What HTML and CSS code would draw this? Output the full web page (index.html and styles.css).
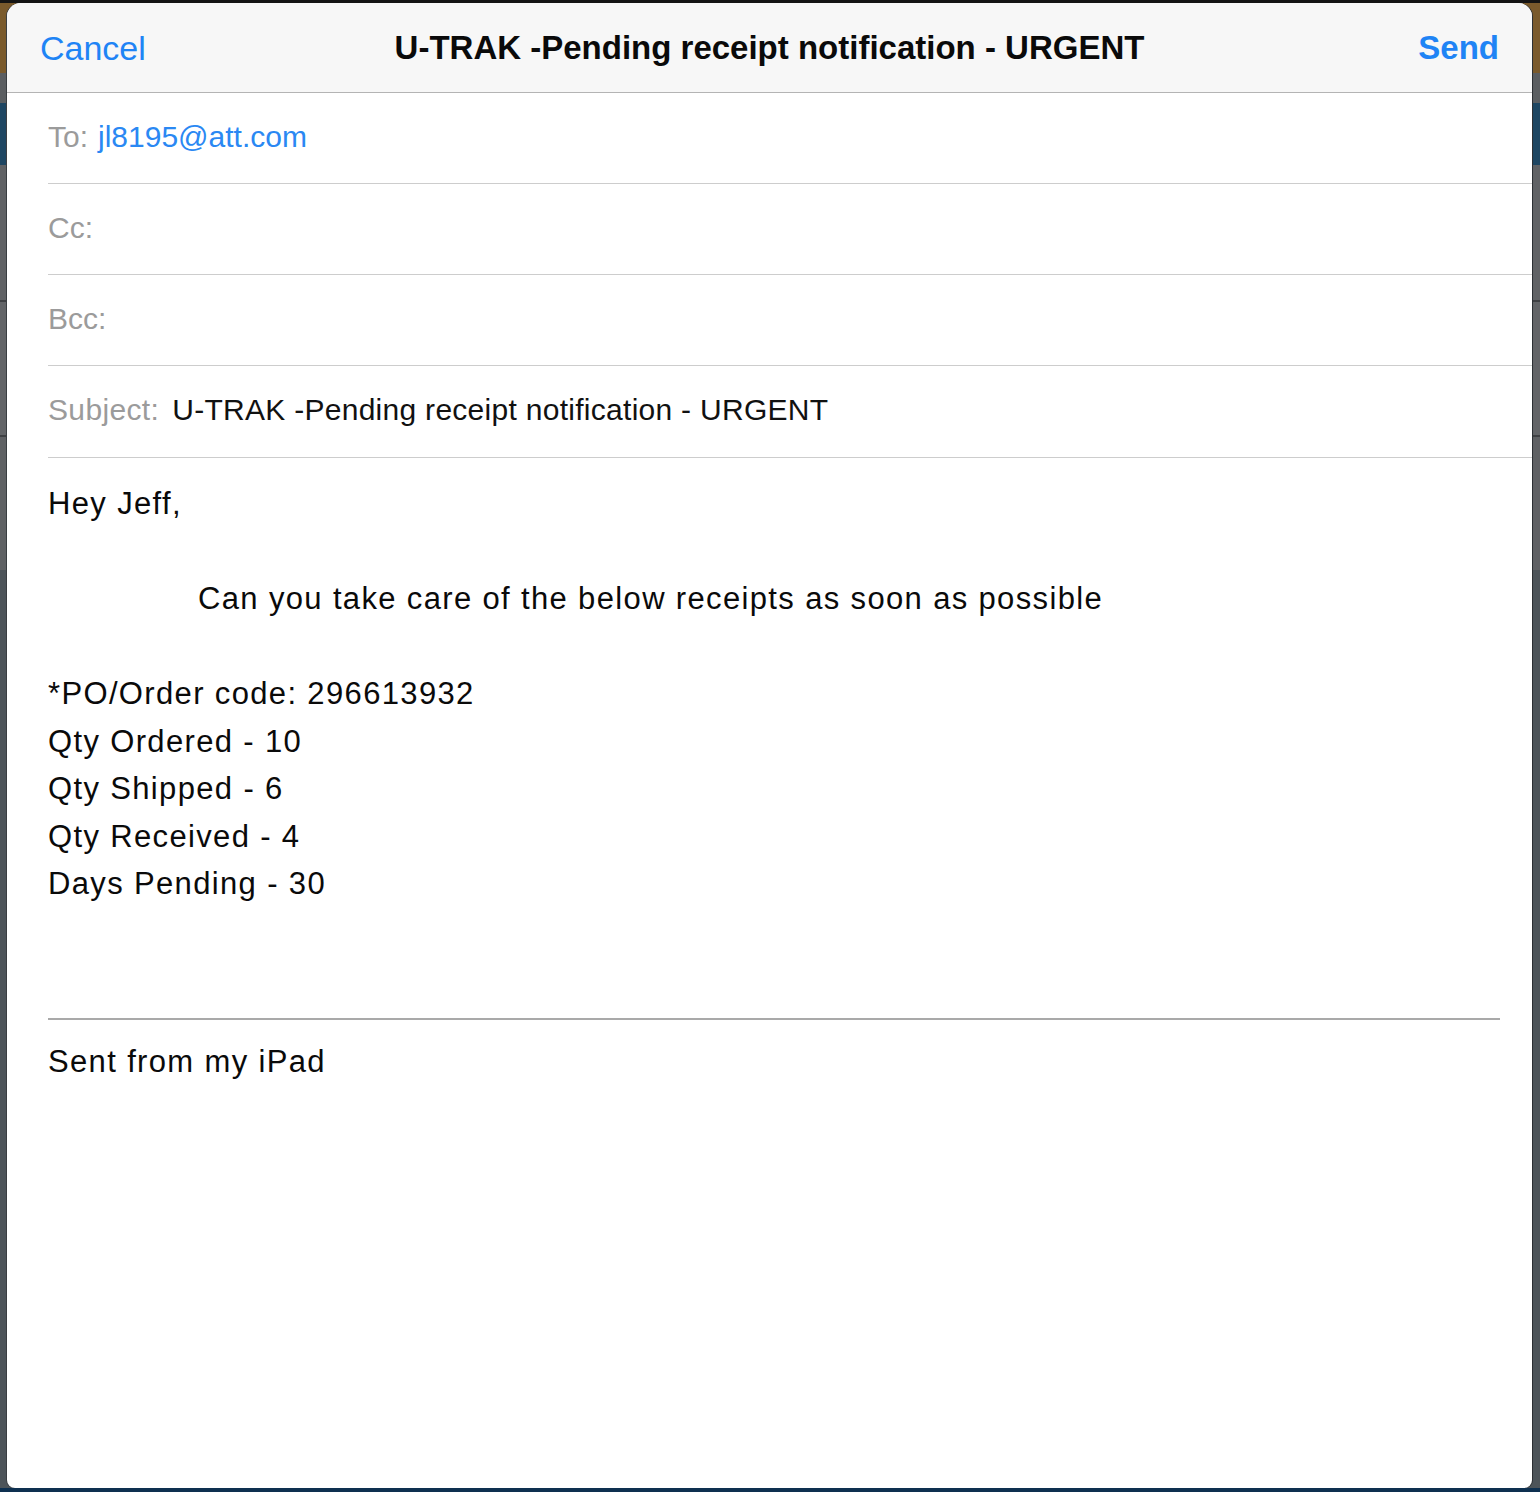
FILE: index.html
```html
<!DOCTYPE html>
<html lang="en">
<head>
<meta charset="utf-8">
<title>U-TRAK -Pending receipt notification - URGENT</title>
<link rel="stylesheet" href="styles.css">
</head>
<body>
<div class="backdrop">
  <div class="band band-black"></div>
  <div class="band band-brown"></div>
  <div class="band band-gray1"></div>
  <div class="band band-blue"></div>
  <div class="band band-gray2"></div>
  <div class="band band-gray3"></div>
  <div class="band band-gray4"></div>
  <div class="band band-slate"></div>
  <div class="band band-navy"></div>
</div>

<div class="sheet">
  <header class="navbar">
    <span class="nav-btn">Cancel</span>
    <h1 class="nav-title">U-TRAK -Pending receipt notification - URGENT</h1>
    <span class="nav-btn nav-send">Send</span>
  </header>

  <div class="field"><span class="label">To:</span><span class="recipient">jl8195@att.com</span></div>
  <div class="field"><span class="label">Cc:</span></div>
  <div class="field"><span class="label">Bcc:</span></div>
  <div class="field field-last"><span class="label label-subject">Subject:</span><span class="subject">U-TRAK -Pending receipt notification - URGENT</span></div>

  <div class="body">
    <p class="line">Hey Jeff,</p>
    <p class="line blank"></p>
    <p class="line indent">Can you take care of the below receipts as soon as possible</p>
    <p class="line blank"></p>
    <p class="line">*PO/Order code: 296613932</p>
    <p class="line">Qty Ordered - 10</p>
    <p class="line">Qty Shipped - 6</p>
    <p class="line">Qty Received - 4</p>
    <p class="line">Days Pending - 30</p>
    <p class="line blank"></p>
    <p class="line blank"></p>
    <div class="sig-rule"></div>
    <p class="line signature">Sent from my iPad</p>
  </div>
</div>
</body>
</html>
```

FILE: styles.css
```css
html, body {
  margin: 0;
  padding: 0;
}

body {
  width: 1540px;
  height: 1492px;
  overflow: hidden;
  position: relative;
  font-family: "Liberation Sans", Arial, sans-serif;
  background: #4d5459;
}

.backdrop {
  display: flex;
  flex-direction: column;
  height: 1492px;
}

.band { flex: none; }
.band-black { height: 3px; background: #141414; }
.band-brown { height: 70px; background: #7a5a2c; }
.band-gray1 { height: 30px; background: #5b5e61; }
.band-blue { height: 62px; background: #1e4662; }
.band-gray2 { height: 135px; background: #606265; border-bottom: 2px solid #3e4043; }
.band-gray3 { height: 133px; background: #626467; border-bottom: 2px solid #3e4043; }
.band-gray4 { height: 133px; background: #5f6164; }
.band-slate { flex: 1; background: #4d5459; }
.band-navy { height: 4px; background: #0e3050; }

.sheet {
  position: absolute;
  left: 7px;
  top: 3px;
  width: 1525px;
  height: 1485px;
  background: #ffffff;
  border-radius: 14px 14px 8px 8px;
  box-shadow: 1px 0 0 #2c3034, -1px 0 0 #3a3e42;
  overflow: hidden;
  display: flex;
  flex-direction: column;
}

.navbar {
  flex: none;
  height: 90px;
  background: #f7f7f7;
  border-bottom: 1px solid #b4b4b4;
  display: flex;
  align-items: center;
  justify-content: space-between;
  padding: 0 33px;
  box-sizing: border-box;
  position: relative;
}

.nav-btn {
  font-size: 34px;
  color: #1f84f5;
  line-height: 1;
}

.nav-send {
  font-weight: bold;
  font-size: 33px;
}

.nav-title {
  margin: 0;
  font-size: 33px;
  font-weight: bold;
  color: #0a0a0a;
  line-height: 1;
  position: absolute;
  left: 0;
  right: 0;
  text-align: center;
  pointer-events: none;
}

.field {
  flex: none;
  height: 91px;
  margin-left: 41px;
  border-bottom: 1px solid #cdcdcd;
  box-sizing: border-box;
  display: flex;
  align-items: center;
  font-size: 30px;
  padding-bottom: 3px;
}

.field-last {
  height: 92px;
}

.label {
  color: #9b9b9b;
  margin-right: 10px;
}

.label-subject {
  letter-spacing: 0.35px;
}

.recipient {
  color: #2a88f3;
}

.subject {
  color: #111111;
  margin-left: 3px;
  letter-spacing: 0.28px;
}

.body {
  padding: 22px 32px 0 41px;
  font-size: 31px;
  color: #0a0a0a;
  letter-spacing: 1.35px;
}

.line {
  margin: 0;
  height: 47.5px;
  line-height: 47.5px;
  white-space: pre;
}

.indent {
  padding-left: 150px;
}

.sig-rule {
  height: 2px;
  background: #a9a9a9;
  margin-top: 15px;
  margin-bottom: 18px;
}
```
